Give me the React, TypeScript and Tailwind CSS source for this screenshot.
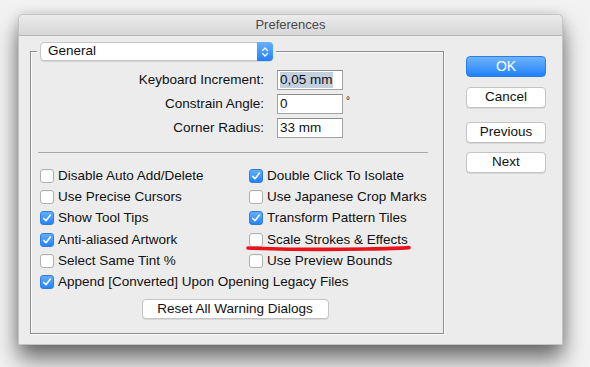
function Check({ checked }: { checked?: boolean }) {
  if (checked) {
    return (
      <span className="flex h-[14px] w-[14px] shrink-0 items-center justify-center rounded-[3px] border border-[#2f7fe0] bg-linear-to-b from-[#62adfc] to-[#1f84fb]">
        <svg width="10" height="10" viewBox="0 0 10 10">
          <path d="M1.8 5.4 L4 7.8 L8.4 2" stroke="white" strokeWidth="1.5" fill="none" strokeLinecap="round" strokeLinejoin="round" />
        </svg>
      </span>
    );
  }
  return <span className="h-[14px] w-[14px] shrink-0 rounded-[3px] border border-[#b0b0b0] bg-white shadow-[inset_0_1px_0_#f4f4f4]" />;
}

function Option({ label, checked }: { label: string; checked?: boolean }) {
  return (
    <div className="flex h-[21.2px] items-center gap-[4px]">
      <Check checked={checked} />
      <span className="whitespace-nowrap">{label}</span>
    </div>
  );
}

function Button({ label, primary }: { label: string; primary?: boolean }) {
  if (primary) {
    return (
      <div className="flex h-[21px] w-[80px] items-center justify-center rounded-[4px] border border-[#2c7ee6] bg-linear-to-b from-[#6db4fb] to-[#1b80fa] text-[14px] text-white">
        {label}
      </div>
    );
  }
  return (
    <div className="flex h-[21px] w-[80px] items-center justify-center rounded-[4px] border border-[#c4c4c4] bg-white text-[13.5px] text-[#111] shadow-[0_1px_0_#d8d8d8]">
      {label}
    </div>
  );
}

function Field({ label, value, selected, unit }: { label: string; value: string; selected?: boolean; unit?: string }) {
  return (
    <div className="flex h-[20px] items-center">
      <span className="w-[246px] pr-[13px] text-right">{label}</span>
      <div className="flex h-[20px] w-[66px] items-center border border-[#a2a2a2] border-t-[#8c8c8c] bg-white pl-[2px]">
        <span className={selected ? "bg-[#c3d0df] leading-[16px]" : "leading-[16px]"}>{value}</span>
      </div>
      {unit && <span className="ml-[3px] -mt-[8px] text-[10px]">{unit}</span>}
    </div>
  );
}

export default function App() {
  return (
    <div className="h-[367px] w-[590px] overflow-hidden bg-[#f2f2f2] pl-[18px] pt-[14px] font-['Liberation_Sans',Arial,sans-serif] text-[13.5px] text-[#111]">
      <div className="flex h-[331px] w-[545px] flex-col rounded-t-[5px] border border-[#c4c4c4] bg-[#ececec] shadow-[0_14px_22px_rgba(0,0,0,0.55),0_0_12px_rgba(0,0,0,0.12)]">
        {/* Title bar */}
        <div className="flex h-[21px] items-center justify-center rounded-t-[5px] border-b border-[#b8b8b8] bg-linear-to-b from-[#ececec] to-[#d6d6d6] text-[13px] text-[#4a4a4a]">
          Preferences
        </div>

        <div className="flex pl-[11px] pt-[6px]">
          {/* Left group */}
          <div className="flex w-[414px] flex-col">
            <div className="relative z-10 ml-[7px] flex w-[239px] bg-[#ececec] px-[3px]">
              <div className="flex h-[19px] w-[233px] items-center justify-between rounded-[4px] border border-[#c6c6c6] bg-white pl-[7px] shadow-[0_1px_0_#d4d4d4]">
                <span>General</span>
                <span className="-mr-px flex h-[19px] w-[16px] items-center justify-center rounded-r-[4px] bg-linear-to-b from-[#6aaffb] to-[#1c7ff9]">
                  <svg width="8" height="12" viewBox="0 0 8 12">
                    <path d="M1.5 4.5 L4 2 L6.5 4.5 M1.5 7.5 L4 10 L6.5 7.5" stroke="white" strokeWidth="1.3" fill="none" strokeLinecap="round" strokeLinejoin="round" />
                  </svg>
                </span>
              </div>
            </div>

            <div className="-mt-[10px] flex h-[283px] flex-col border border-[#8d8d8d] shadow-[1px_1px_0_#fafafa,inset_1px_1px_0_#fafafa]">
              <div className="flex flex-col gap-[4px] pt-[18px]">
                <Field label="Keyboard Increment:" value="0,05 mm" selected />
                <Field label="Constrain Angle:" value="0" unit="°" />
                <Field label="Corner Radius:" value="33 mm" />
              </div>

              <div className="ml-[7px] mr-[15px] mt-[14px] h-px bg-[#a8a8a8]" />

              <div className="mt-[12.5px] grid grid-cols-[209px_1fr] pl-[9px]">
                <Option label="Disable Auto Add/Delete" />
                <Option label="Double Click To Isolate" checked />
                <Option label="Use Precise Cursors" />
                <Option label="Use Japanese Crop Marks" />
                <Option label="Show Tool Tips" checked />
                <Option label="Transform Pattern Tiles" checked />
                <Option label="Anti-aliased Artwork" checked />
                <div className="relative">
                  <Option label="Scale Strokes & Effects" />
                  <svg className="absolute left-[-3px] top-[16px]" width="166" height="7" viewBox="0 0 166 7">
                    <path d="M2 3 Q60 5.2 120 4 Q150 3.4 163 2.6" stroke="#e8141b" strokeWidth="3.6" fill="none" strokeLinecap="round" />
                  </svg>
                </div>
                <Option label="Select Same Tint %" />
                <Option label="Use Preview Bounds" />
                <div className="col-span-2">
                  <Option label="Append [Converted] Upon Opening Legacy Files" checked />
                </div>
              </div>

              <div className="mt-[6px] flex justify-center pr-[4px]">
                <div className="flex h-[20px] w-[187px] items-center justify-center rounded-[4px] border border-[#c4c4c4] bg-white shadow-[0_1px_0_#d8d8d8]">
                  Reset All Warning Dialogs
                </div>
              </div>
            </div>
          </div>

          {/* Right buttons */}
          <div className="ml-[22px] mt-[14px] flex flex-col">
            <Button label="OK" primary />
            <div className="mt-[10px]">
              <Button label="Cancel" />
            </div>
            <div className="mt-[14px]">
              <Button label="Previous" />
            </div>
            <div className="mt-[9px]">
              <Button label="Next" />
            </div>
          </div>
        </div>
      </div>
    </div>
  );
}
